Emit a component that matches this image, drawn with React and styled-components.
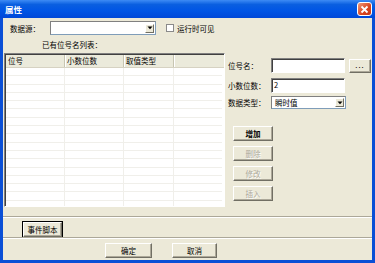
import React from "react"
import styled, { createGlobalStyle } from "styled-components"

const Global = createGlobalStyle`
  html, body { margin: 0; padding: 0; background: #fff; }
  body {
    font-family: "Noto Sans CJK SC", "Liberation Sans", sans-serif;
    font-size: 7.5px;
    color: #000;
  }
`

const Window = styled.div`
  width: 375px;
  height: 263px;
  display: flex;
  flex-direction: column;
  overflow: hidden;
`

const TitleBar = styled.div`
  height: 18px;
  flex: none;
  display: flex;
  align-items: center;
  justify-content: space-between;
  padding: 0 3px 0 5px;
  background: linear-gradient(#3d8bf5 0%, #0a5fe0 25%, #0055e5 60%, #0048d8 100%);
  color: #fff;
  font-weight: bold;
  font-size: 8.5px;
  box-sizing: border-box;
`

const CloseBtn = styled.div`
  width: 15px;
  height: 14px;
  border: 1px solid #fff;
  border-radius: 3px;
  box-sizing: border-box;
  background: linear-gradient(135deg, #f09a7a, #d9441e 60%, #c5381a);
  display: flex;
  align-items: center;
  justify-content: center;
`

const Body = styled.div`
  flex: 1;
  min-height: 0;
  background: #ece9d8;
  border: 3px solid #0a4fd6;
  border-top: 0;
  display: flex;
  flex-direction: column;
`

const TopRow = styled.div`
  display: flex;
  align-items: center;
  margin-top: 3px;
  height: 14px;
  padding-left: 7px;
`

const Label = styled.span`
  width: ${p => p.w || 40}px;
  white-space: nowrap;
  flex: none;
`

const Combo = styled.div`
  width: ${p => p.w}px;
  height: ${p => p.h || 14}px;
  box-sizing: border-box;
  background: #fff;
  border: 1px solid #7f9db9;
  border-top-color: #808080;
  border-left-color: #808080;
  display: flex;
  align-items: center;
  justify-content: space-between;
  padding-left: 3px;
`

const Arrow = styled.div`
  width: 9px;
  height: 9px;
  margin-right: 1px;
  box-sizing: border-box;
  background: #ece9d8;
  border: 1px solid;
  border-color: #fff #716f64 #716f64 #fff;
  display: flex;
  align-items: center;
  justify-content: center;
`

const Check = styled.label`
  display: flex;
  align-items: center;
  gap: 3px;
  margin-left: 10px;
`

const CheckBox = styled.span`
  width: 8px;
  height: 8px;
  box-sizing: border-box;
  background: #fff;
  border: 1px solid #8a8a8a;
`

const Caption = styled.div`
  margin: 5px 0 0 39px;
  height: 10px;
  line-height: 10px;
`

const Main = styled.div`
  display: flex;
  margin-top: 3px;
`

const List = styled.div`
  margin-left: 1px;
  width: 221px;
  height: 154px;
  box-sizing: border-box;
  border: 1px solid;
  border-color: #808080 #fff #fff #808080;
  box-shadow: inset 1px 1px 0 #404040;
  background: #fff;
  padding: 1px 0 0 1px;
  overflow: hidden;
  display: flex;
  flex-direction: column;
`

const Header = styled.div`
  display: grid;
  grid-template-columns: 59px 59px 50px 1fr;
  height: 12px;
  background: #ebeadb;
  border-bottom: 1px solid #d6d2c2;
  flex: none;
`

const HeadCell = styled.div`
  padding-left: 2px;
  line-height: 12px;
  border-right: 1px solid #c7c5b2;
  box-shadow: 1px 0 0 #fff;
  white-space: nowrap;
  &:last-child { border-right: 0; box-shadow: none; margin-right: 2px; }
`

const Rows = styled.div`
  flex: 1;
  display: grid;
  grid-template-columns: 59px 59px 50px 1fr;
  grid-auto-rows: 8.3px;
  margin-right: 2px;
`

const Cell = styled.div`
  border-right: 1px solid #f0efea;
  border-bottom: 1px solid #f0efea;
  &:nth-child(4n) { border-right: 0; }
`

const Side = styled.div`
  margin-left: 3px;
  display: flex;
  flex-direction: column;
`

const Field = styled.div`
  display: flex;
  align-items: center;
  margin-top: ${p => p.mt}px;
`

const TextBox = styled.div`
  width: 74px;
  height: 15px;
  box-sizing: border-box;
  background: #fff;
  border: 1px solid;
  border-color: #808080 #fff #fff #808080;
  box-shadow: inset 1px 1px 0 #404040;
  padding: 1px 2px;
  line-height: 10px;
`

const Button = styled.div`
  width: ${p => p.w || 40}px;
  height: 15px;
  box-sizing: border-box;
  background: #ece9d8;
  border: 1px solid;
  border-color: #fff #716f64 #716f64 #fff;
  box-shadow: inset -1px -1px 0 #aca899;
  display: flex;
  align-items: center;
  justify-content: center;
  color: ${p => (p.disabled ? "#aca899" : "#000")};
  text-shadow: ${p => (p.disabled ? "1px 1px 0 #fff" : "none")};
  font-weight: ${p => (p.bold ? "bold" : "normal")};
  margin-top: ${p => p.mt || 0}px;
  margin-left: ${p => p.ml || 0}px;
  flex: none;
`

const DotsButton = styled(Button)`
  height: 14px;
  letter-spacing: 1px;
  padding-bottom: 2px;
`

const DefaultButton = styled(Button)`
  outline: 1px solid #000;
  outline-offset: 0;
`

const Buttons = styled.div`
  display: flex;
  flex-direction: column;
  padding-left: 5px;
  margin-top: 17px;
`

const Sep = styled.div`
  height: 0;
  flex: none;
  margin-top: ${p => p.mt}px;
  border-top: 1px solid #aca899;
  border-bottom: 1px solid #fff;
`

const EventRow = styled.div`
  padding-left: 20px;
  margin-top: 4px;
`

const Footer = styled.div`
  display: flex;
  margin-top: 4px;
  padding-left: 102px;
  gap: 20px;
`

const Tri = () => (
  <svg width="6" height="4" viewBox="0 0 6 4">
    <path d="M0.5 0.5 L5.5 0.5 L3 3.2 Z" fill="#000" />
  </svg>
)

const rows = Array.from({ length: 17 * 4 })

export default function App() {
  return (
    <Window>
      <Global />
      <TitleBar>
        <span>属性</span>
        <CloseBtn>
          <svg width="9" height="9" viewBox="0 0 9 9">
            <path d="M1.5 1.5 L7.5 7.5 M7.5 1.5 L1.5 7.5" stroke="#fff" strokeWidth="1.8" />
          </svg>
        </CloseBtn>
      </TitleBar>
      <Body>
        <TopRow>
          <Label>数据源：</Label>
          <Combo w={106}>
            <span />
            <Arrow><Tri /></Arrow>
          </Combo>
          <Check>
            <CheckBox />
            <span>运行时可见</span>
          </Check>
        </TopRow>
        <Caption>已有位号名列表：</Caption>
        <Main>
          <List>
            <Header>
              <HeadCell>位号</HeadCell>
              <HeadCell>小数位数</HeadCell>
              <HeadCell>取值类型</HeadCell>
              <HeadCell />
            </Header>
            <Rows>
              {rows.map((_, i) => <Cell key={i} />)}
            </Rows>
          </List>
          <Side>
            <Field mt={5}>
              <Label w={43}>位号名：</Label>
              <TextBox />
              <DotsButton w={22} ml={4}>...</DotsButton>
            </Field>
            <Field mt={5}>
              <Label w={43}>小数位数：</Label>
              <TextBox>2</TextBox>
            </Field>
            <Field mt={3}>
              <Label w={43}>数据类型：</Label>
              <Combo w={75} h={13}>
                <span>瞬时值</span>
                <Arrow><Tri /></Arrow>
              </Combo>
            </Field>
            <Buttons>
              <Button bold>增加</Button>
              <Button disabled mt={5}>删除</Button>
              <Button disabled mt={5}>修改</Button>
              <Button disabled mt={5}>插入</Button>
            </Buttons>
          </Side>
        </Main>
        <Sep mt={9} />
        <EventRow>
          <DefaultButton w={39}>事件脚本</DefaultButton>
        </EventRow>
        <Sep mt={0} />
        <Footer>
          <Button w={47}>确定</Button>
          <Button w={45}>取消</Button>
        </Footer>
      </Body>
    </Window>
  )
}
